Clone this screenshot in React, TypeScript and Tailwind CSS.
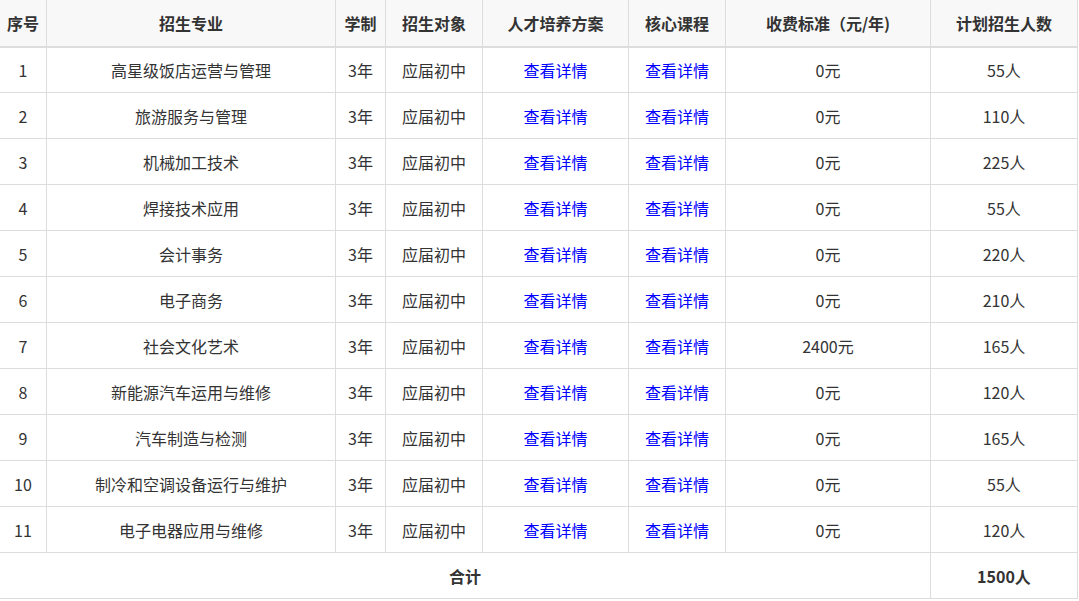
const rows = [
  ["1","高星级饭店运营与管理","0元","55人"],
  ["2","旅游服务与管理","0元","110人"],
  ["3","机械加工技术","0元","225人"],
  ["4","焊接技术应用","0元","55人"],
  ["5","会计事务","0元","220人"],
  ["6","电子商务","0元","210人"],
  ["7","社会文化艺术","2400元","165人"],
  ["8","新能源汽车运用与维修","0元","120人"],
  ["9","汽车制造与检测","0元","165人"],
  ["10","制冷和空调设备运行与维护","0元","55人"],
  ["11","电子电器应用与维修","0元","120人"],
];
const td = "border border-[#dddddd] h-[46px] p-0 text-center";
export default function App() {
  return (
    <div className="w-[1079px] h-[601px] bg-white overflow-hidden text-[#333333] text-[16px]" style={{fontFamily:'"Microsoft YaHei","Noto Sans CJK SC",sans-serif'}}>
      <table className="border-collapse table-fixed w-[1078px] -mt-px -ml-px">
        <colgroup>
          <col className="w-[47px]"/><col className="w-[289px]"/><col className="w-[50px]"/><col className="w-[97px]"/><col className="w-[146px]"/><col className="w-[97px]"/><col className="w-[205px]"/><col className="w-[147px]"/>
        </colgroup>
        <thead>
          <tr className="bg-[#f8f8f8] font-bold">
            {["序号","招生专业","学制","招生对象","人才培养方案","核心课程","收费标准（元/年)","计划招生人数"].map(h=>(
              <th key={h} className={td+" border-b-2 h-[47px]"}>{h}</th>
            ))}
          </tr>
        </thead>
        <tbody>
          {rows.map(r=>(
            <tr key={r[0]}>
              <td className={td}>{r[0]}</td>
              <td className={td}>{r[1]}</td>
              <td className={td}>3年</td>
              <td className={td}>应届初中</td>
              <td className={td+" text-[#0000ff]"}>查看详情</td>
              <td className={td+" text-[#0000ff]"}>查看详情</td>
              <td className={td}>{r[2]}</td>
              <td className={td}>{r[3]}</td>
            </tr>
          ))}
          <tr className="font-bold">
            <td className={td} colSpan={7}>合计</td>
            <td className={td}>1500人</td>
          </tr>
        </tbody>
      </table>
    </div>
  );
}
